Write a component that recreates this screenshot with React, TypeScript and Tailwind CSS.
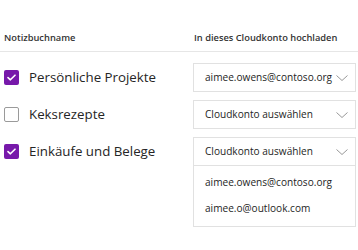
import React from "react";

const font = { fontFamily: '"Open Sans", "Noto Sans", sans-serif' };

function Check({ checked }: { checked: boolean }) {
  if (checked) {
    return (
      <div className="w-[15px] h-[15px] rounded-[2px] bg-[#7719aa] flex items-center justify-center shrink-0">
        <svg width="9" height="7" viewBox="0 0 9 7" fill="none">
          <path d="M1 3.6 L3.4 5.8 L8 1.2" stroke="white" strokeWidth="1.6" strokeLinecap="round" strokeLinejoin="round" />
        </svg>
      </div>
    );
  }
  return <div className="w-[15px] h-[15px] rounded-[2px] border border-[#9a9a9a] bg-white shrink-0" />;
}

function Chevron() {
  return (
    <svg width="12" height="6" viewBox="0 0 12 6" fill="none" className="shrink-0">
      <path d="M0.5 0.5 L6 5.5 L11.5 0.5" stroke="#8c8c8c" strokeWidth="0.9" />
    </svg>
  );
}

function Row({ label, checked, value, open }: { label: string; checked: boolean; value: string; open?: boolean }) {
  return (
    <div className="flex items-start">
      <div className="w-[193px] h-[29px] pl-[4px] flex items-center gap-[10px]">
        <Check checked={checked} />
        <span className="text-[13.3px] text-[#252525] leading-none">{label}</span>
      </div>
      <div className="w-[163px] border border-[#e1e1e1] bg-white">
        <div className="h-[27px] flex items-center justify-between pl-[11px] pr-[7px]">
          <span className="text-[10.1px] text-[#252525]">{value}</span>
          <Chevron />
        </div>
        {open && (
          <div className="border-t border-[#e1e1e1] py-[4px]">
            <div className="h-[26px] flex items-center pl-[11px] text-[10.1px] text-[#252525]">aimee.owens@contoso.org</div>
            <div className="h-[26px] flex items-center pl-[11px] text-[10.1px] text-[#252525]">aimee.o@outlook.com</div>
          </div>
        )}
      </div>
    </div>
  );
}

export default function App() {
  return (
    <div className="w-[358px] h-[250px] bg-white overflow-hidden" style={font}>
      <div className="flex pt-[31px] pb-[6px] border-b border-[#e6e6e6] text-[9.3px] leading-[14px] font-semibold text-[#333]">
        <div className="w-[193px] pl-[4px]">Notizbuchname</div>
        <div className="pl-[1px]">In dieses Cloudkonto hochladen</div>
      </div>
      <div className="mt-[11px] flex flex-col gap-[8px]">
        <Row label="Persönliche Projekte" checked value="aimee.owens@contoso.org" />
        <Row label="Keksrezepte" checked={false} value="Cloudkonto auswählen" />
        <Row label="Einkäufe und Belege" checked value="Cloudkonto auswählen" open />
      </div>
    </div>
  );
}
